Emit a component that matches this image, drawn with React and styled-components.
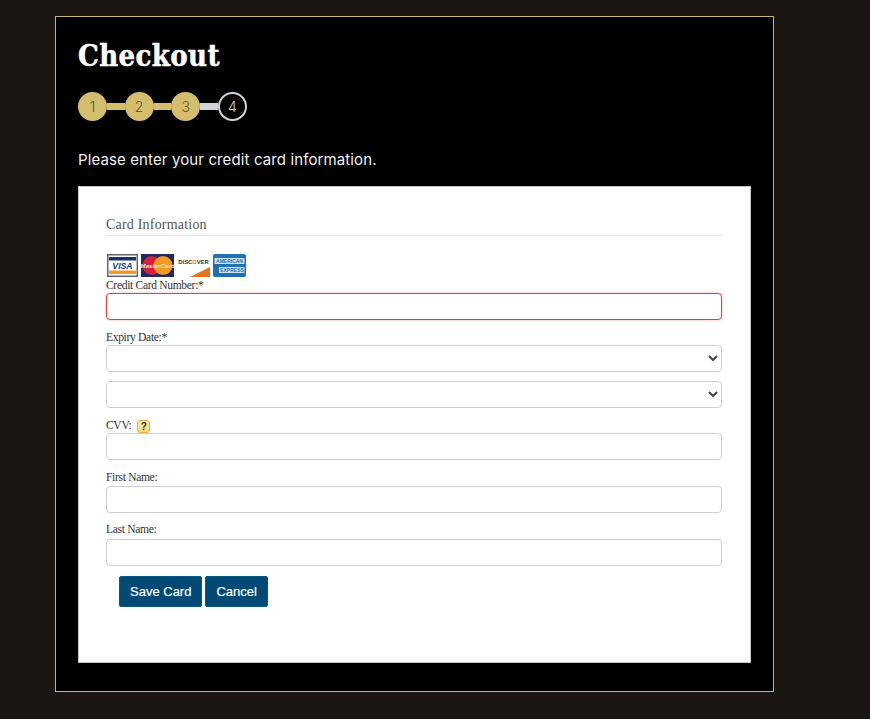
import React from 'react'
import styled, { createGlobalStyle } from 'styled-components'

const GlobalStyle = createGlobalStyle`
  html, body {
    margin: 0;
    padding: 0;
    background-color: #1b1613;
  }
  * {
    box-sizing: border-box;
  }
`

const Frame = styled.div`
  width: 719px;
  height: 676px;
  margin: 16px 0 0 55px;
  padding: 20px 22px 29px;
  background-color: #000;
  border: 1px solid #c9b56b;
`

const Title = styled.h1`
  margin: 0;
  font-family: "DejaVu Serif", serif;
  font-stretch: condensed;
  font-size: 29px;
  font-weight: 700;
  line-height: 38px;
  letter-spacing: 0.4px;
  color: #fff;
  -webkit-text-stroke: 0.5px #fff;
`

const Stepper = styled.div`
  display: flex;
  align-items: center;
  margin-top: 17px;
`

const Step = styled.div`
  width: 29px;
  height: 29px;
  display: flex;
  align-items: center;
  justify-content: center;
  flex-shrink: 0;
  border-radius: 50%;
  font-family: "Inter", sans-serif;
  font-size: 14px;
  font-weight: 300;
  color: ${({ $active }) => ($active ? '#d5d8dc' : '#5f5230')};
  background-color: ${({ $active }) => ($active ? '#000' : '#d4bd6c')};
  border: ${({ $active }) => ($active ? '2px solid #d0d3d8' : 'none')};
`

const Connector = styled.div`
  width: 17.67px;
  height: 7px;
  background-color: ${({ $done }) => ($done ? '#d4bd6c' : '#d0d3d8')};
`

const Intro = styled.p`
  margin: 29px 0 0;
  font-family: "Inter", sans-serif;
  font-size: 15px;
  line-height: 20px;
  letter-spacing: 0.12px;
  color: #f2f2f2;
`

const Card = styled.div`
  height: 477px;
  margin-top: 16px;
  padding: 29px 28px 0 27px;
  background-color: #fff;
  border: 1px solid #c4c4c4;
`

const Legend = styled.div`
  padding-bottom: 1px;
  margin-bottom: 18px;
  font-family: "Liberation Serif", serif;
  font-size: 14px;
  line-height: 18px;
  letter-spacing: 0.2px;
  color: #555;
  border-bottom: 1px solid #e8e8e8;
`

const Logos = styled.div`
  display: flex;
  gap: 3px;
  height: 24px;
  margin-left: 1px;
`

const Field = styled.div`
  margin-bottom: ${({ $gap }) => $gap}px;
`

const Label = styled.label`
  display: flex;
  align-items: center;
  gap: 6px;
  height: 14px;
  margin-bottom: ${({ $after }) => $after || 1}px;
  font-family: "Liberation Serif", serif;
  font-size: 11.5px;
  letter-spacing: -0.3px;
  color: #333;
`

const Input = styled.input`
  display: block;
  width: 100%;
  height: 27px;
  padding: 0 10px;
  background-color: #fff;
  border: 1px solid ${({ $error }) => ($error ? '#ee3b3b' : '#cfcfcf')};
  border-radius: 4px;
  box-shadow: ${({ $error }) => ($error ? '0 0 3px rgba(238, 59, 59, 0.4)' : 'none')};
`

const SelectWrap = styled.div`
  position: relative;
  height: 27px;
  border: 1px solid #cfcfcf;
  border-radius: 4px;
  background-color: #fff;
`

const Chevron = styled.svg`
  position: absolute;
  top: 8px;
  right: 3px;
  width: 10px;
  height: 8px;
`

const Help = styled.span`
  width: 13px;
  height: 13px;
  margin-top: 3px;
  display: flex;
  align-items: center;
  justify-content: center;
  font-family: "Liberation Sans", sans-serif;
  font-size: 10px;
  font-weight: 700;
  letter-spacing: 0;
  color: #333;
  background: linear-gradient(#fdeeb5, #f9d878);
  border: 1px solid #e3ac3c;
  border-radius: 3px;
`

const Actions = styled.div`
  display: flex;
  gap: 3px;
  margin-left: 13px;
`

const Button = styled.button`
  height: 31px;
  padding: 0 10px;
  font-family: "Liberation Sans", sans-serif;
  font-size: 13px;
  color: #fff;
  background-color: #004a75;
  border: 1px solid #0d5680;
  border-radius: 2px;
  -webkit-text-stroke: 0.2px #fff;
`

const VisaLogo = () => (
  <svg width="31" height="23" viewBox="0 0 32 23" preserveAspectRatio="none">
    <rect x="0.75" y="0.75" width="30.5" height="21.5" fill="#fff" stroke="#5f6468" strokeWidth="1.5" />
    <rect x="2" y="3" width="28" height="3.5" fill="#1a2f6b" />
    <rect x="2" y="16.5" width="28" height="3.5" fill="#ef9b1d" />
    <text x="16" y="15" textAnchor="middle" fontFamily="Liberation Sans" fontSize="9" fontWeight="700" fontStyle="italic" fill="#1a3f82">VISA</text>
  </svg>
)

const MasterLogo = () => (
  <svg width="33" height="23" viewBox="0 0 33 23">
    <rect width="33" height="23" fill="#1e2a68" />
    <circle cx="11" cy="11.5" r="9.5" fill="#d8203a" />
    <circle cx="22" cy="11.5" r="9.5" fill="#f29a1f" />
    <text x="16.5" y="14" textAnchor="middle" fontFamily="Liberation Sans" fontSize="6.2" fontWeight="700" fontStyle="italic" fill="#f6e3d0">MasterCard</text>
  </svg>
)

const DiscoverLogo = () => (
  <svg width="33" height="23" viewBox="0 0 33 23">
    <rect width="33" height="23" fill="#fff" />
    <path d="M13 23 L33 13 L33 23 Z" fill="#e8701f" />
    <text x="16.5" y="10" textAnchor="middle" fontFamily="Liberation Sans" fontSize="5.8" fontWeight="700" fill="#333">
      DISC<tspan fill="#e8701f">O</tspan>VER
    </text>
  </svg>
)

const AmexLogo = () => (
  <svg width="33" height="23" viewBox="0 0 33 23">
    <rect width="33" height="23" rx="2" fill="#1f6fb2" />
    <rect x="1.5" y="4" width="30" height="6" fill="#cfe2f2" />
    <rect x="6" y="13" width="25.5" height="6" fill="#cfe2f2" />
    <text x="16.5" y="9" textAnchor="middle" fontFamily="Liberation Sans" fontSize="5" fontWeight="700" fill="#1f6fb2">AMERICAN</text>
    <text x="19" y="18" textAnchor="middle" fontFamily="Liberation Sans" fontSize="5" fontWeight="700" fill="#1f6fb2">EXPRESS</text>
  </svg>
)

const SelectBox = () => (
  <SelectWrap>
    <Chevron viewBox="0 0 10 8">
      <path d="M1 2 L5 6 L9 2" fill="none" stroke="#444" strokeWidth="2" />
    </Chevron>
  </SelectWrap>
)

const App = () => {
  return (
    <>
      <GlobalStyle />
      <Frame>
        <Title>Checkout</Title>
        <Stepper>
          <Step>1</Step>
          <Connector $done />
          <Step>2</Step>
          <Connector $done />
          <Step>3</Step>
          <Connector />
          <Step $active>4</Step>
        </Stepper>
        <Intro>Please enter your credit card information.</Intro>
        <Card>
          <Legend>Card Information</Legend>
          <Logos>
            <VisaLogo />
            <MasterLogo />
            <DiscoverLogo />
            <AmexLogo />
          </Logos>
          <Field $gap={10}>
            <Label>Credit Card Number:*</Label>
            <Input $error />
          </Field>
          <Field $gap={9}>
            <Label>Expiry Date:*</Label>
            <SelectBox />
          </Field>
          <Field $gap={10}>
            <SelectBox />
          </Field>
          <Field $gap={10}>
            <Label>CVV: <Help>?</Help></Label>
            <Input />
          </Field>
          <Field $gap={9}>
            <Label $after={2}>First Name:</Label>
            <Input />
          </Field>
          <Field $gap={10}>
            <Label $after={3}>Last Name:</Label>
            <Input />
          </Field>
          <Actions>
            <Button>Save Card</Button>
            <Button>Cancel</Button>
          </Actions>
        </Card>
      </Frame>
    </>
  )
}

export default App
